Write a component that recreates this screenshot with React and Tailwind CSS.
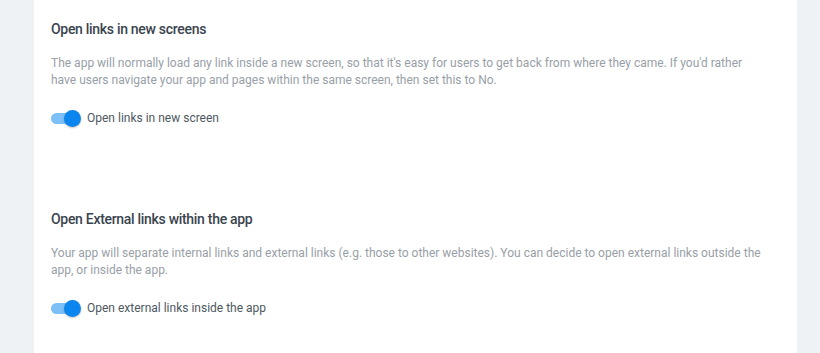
const SECTIONS = [
  {
    title: 'Open links in new screens',
    text: "The app will normally load any link inside a new screen, so that it's easy for users to get back from where they came. If you'd rather have users navigate your app and pages within the same screen, then set this to No.",
    label: 'Open links in new screen',
  },
  {
    title: 'Open External links within the app',
    text: 'Your app will separate internal links and external links (e.g. those to other websites). You can decide to open external links outside the app, or inside the app.',
    label: 'Open external links inside the app',
  },
]

function Toggle({ on }) {
  return (
    <span className="relative inline-flex items-center w-[30px] h-[20px] flex-shrink-0">
      <span className={`block w-[26px] h-[11px] rounded-full ${on ? 'bg-[#7cc0f7]' : 'bg-[#d5dbe0]'}`} />
      <span
        className={`absolute top-[1.5px] w-[17px] h-[17px] rounded-full shadow-[0_1px_2px_rgba(0,0,0,0.25)] ${on ? 'left-[13px] bg-[#0a86ee]' : 'left-0 bg-white'}`}
      />
    </span>
  )
}

export default function App() {
  return (
    <div className="min-h-[353px] bg-[#eef2f5] pl-[34px] pr-[23px]" style={{ fontFamily: "Roboto, 'Noto Sans', sans-serif" }}>
      <div className="bg-white min-h-[353px] pl-[17px] pt-[19px]">
        {SECTIONS.map((s, i) => (
          <section key={i} className={i > 0 ? 'mt-[81px]' : ''}>
            <h2 className="text-[14px] leading-[20px] font-medium tracking-[-0.3px] text-[#3a444e]">{s.title}</h2>
            <p className="mt-4 max-w-[710px] text-[12px] leading-[17px] text-[#98a0a7]">{s.text}</p>
            <label className="mt-[19px] flex items-center gap-[6px] h-[20px]">
              <Toggle on />
              <span className="text-[12px] text-[#4d5862]">{s.label}</span>
            </label>
          </section>
        ))}
      </div>
    </div>
  )
}
